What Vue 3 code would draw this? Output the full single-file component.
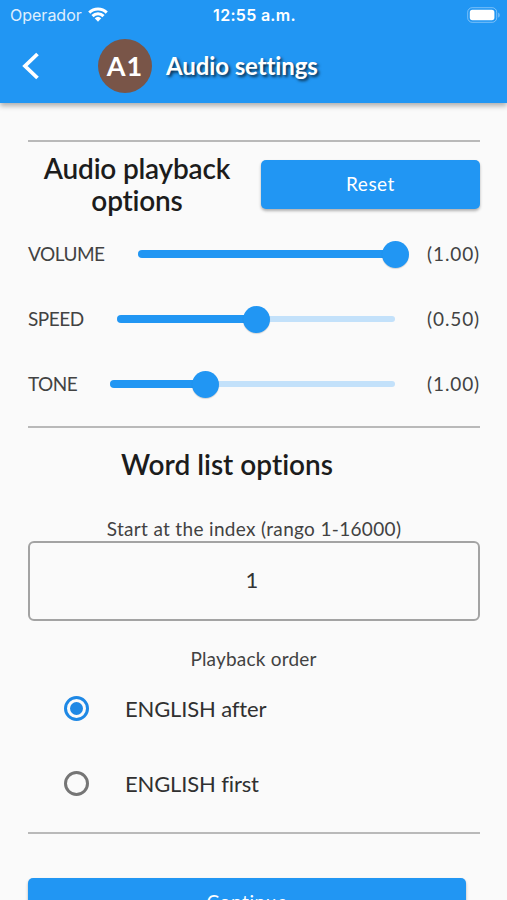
<script setup>
import { reactive, ref } from 'vue';

const start_index = ref("1");
const order = ref("after");

const sliders = reactive([
  { key: "volume", label: "VOLUME", value: 1.0, min: 0, max: 1 },
  { key: "speed", label: "SPEED", value: 0.5, min: 0, max: 1 },
  { key: "tone", label: "TONE", value: 1.0, min: 0.5, max: 2 }
])

const orders = [
  { key: "after", label: "ENGLISH after" },
  { key: "first", label: "ENGLISH first" }
]

function percent(s) {
  return (s.value - s.min) / (s.max - s.min) * 100 + '%';
}

function reset() {
  sliders[0].value = 1.0;
  sliders[1].value = 0.5;
  sliders[2].value = 1.0;
}
</script>

<template>
  <div class="screen">
    <header class="top">
      <div class="status">
        <div class="carrier">
          <span class="operator">Operador</span>
          <svg class="wifi" width="20" height="15" viewBox="0 0 20 15">
            <path d="M0.2 4.6a13.8 13.8 0 0 1 19.6 0l-2.1 2.2a10.8 10.8 0 0 0-15.4 0z" />
            <path d="M3.4 8a9.2 9.2 0 0 1 13.2 0l-2.2 2.2a6.2 6.2 0 0 0-8.8 0z" />
            <path d="M6.7 11.3a4.8 4.8 0 0 1 6.6 0L10 14.7z" />
          </svg>
        </div>
        <span class="clock">12:55 a.m.</span>
        <svg class="battery" width="34" height="16" viewBox="0 0 34 16">
          <rect x="0.7" y="0.7" width="29" height="14.6" rx="4.5" fill="none" stroke="#fff" stroke-opacity=".4" />
          <rect x="2.8" y="2.8" width="24.6" height="10.4" rx="2.6" fill="#fff" />
          <path d="M31.2 5.4c2 .8 2 4.4 0 5.2z" fill="#fff" fill-opacity=".4" />
        </svg>
      </div>
      <div class="bar">
        <svg class="back" width="20" height="28" viewBox="0 0 20 28">
          <path d="M17.5 2L5 14l12.5 12" fill="none" stroke="#fff" stroke-width="3.8" />
        </svg>
        <div class="level"><span>A1</span></div>
        <h1>Audio settings</h1>
      </div>
    </header>

    <main>
      <hr>
      <div class="playback">
        <h2>Audio playback<br>options</h2>
        <button class="btn reset" @click="reset()">Reset</button>
      </div>

      <div class="row" v-for="s in sliders" :key="s.key">
        <span class="name">{{ s.label }}</span>
        <div class="slider">
          <div class="active" :style="{ width: percent(s) }"></div>
          <div class="thumb" :style="{ left: percent(s) }"></div>
        </div>
        <span class="value">({{ s.value.toFixed(2) }})</span>
      </div>

      <hr>
      <h2 class="words">Word list options</h2>
      <label class="hint" for="index">Start at the index (rango 1-16000)</label>
      <input id="index" type="text" v-model="start_index">

      <p class="order-title">Playback order</p>
      <div class="option" v-for="o in orders" :key="o.key" @click="order = o.key">
        <span class="radio" :class="{ on: order == o.key }"></span>
        <span>{{ o.label }}</span>
      </div>
      <hr>
      <button class="btn next">Continue</button>
    </main>
  </div>
</template>

<style>
body {
  margin: 0;
  background: #fafafa;
}
</style>

<style scoped>
* {
  box-sizing: border-box;
}

.screen {
  height: 900px;
  overflow: hidden;
  background: #fafafa;
  color: #424242;
  font-family: Lato, sans-serif;
  font-variant-ligatures: none;
}

.top {
  position: relative;
  height: 103px;
  background: #2196f3;
  color: #fff;
  box-shadow: 0 3px 5px rgba(0, 0, 0, .3);
}

.status {
  display: grid;
  grid-template-columns: 1fr auto 1fr;
  align-items: center;
  height: 29px;
  padding: 0 6px 0 10px;
  font-family: Inter, sans-serif;
}

.carrier {
  display: flex;
  align-items: center;
  gap: 6px;
}

.operator {
  font-size: 16px;
  opacity: .85;
}

.wifi {
  fill: #fff;
}

.clock {
  margin-right: 2px;
  font-size: 16px;
  font-weight: 600;
  letter-spacing: .3px;
}

.battery {
  justify-self: end;
}

.bar {
  display: flex;
  align-items: center;
  height: 73px;
  padding-left: 20px;
}

.level {
  display: flex;
  align-items: center;
  justify-content: center;
  width: 54px;
  height: 54px;
  margin-left: 58px;
  border-radius: 50%;
  background: #795548;
  font-size: 27px;
  font-weight: 700;
  letter-spacing: 1px;
}

h1 {
  margin: 0 0 0 14px;
  font-size: 24px;
  font-weight: 700;
  letter-spacing: -.1px;
  text-shadow: 2px 2px 3px rgba(0, 0, 0, .7);
}

main {
  padding: 37px 27px 0 28px;
}

hr {
  height: 2px;
  margin: 0;
  border: none;
  background: #b9b9b9;
}

.playback {
  display: flex;
  justify-content: space-between;
  height: 79px;
  padding-top: 10px;
}

h2 {
  margin: 0;
  color: #1c1c1c;
  font-size: 28px;
  font-weight: 600;
  line-height: 32px;
  text-align: center;
}

.playback h2 {
  width: 218px;
  letter-spacing: -.2px;
}

.btn {
  padding: 0 0 2px;
  border: none;
  border-radius: 5px;
  background: #2196f3;
  color: #fff;
  font-family: inherit;
  font-size: 19px;
  box-shadow: 0 2px 3px rgba(0, 0, 0, .3);
}

.reset {
  width: 219px;
  height: 49px;
  margin-top: 8px;
  letter-spacing: .5px;
}

.row {
  display: flex;
  align-items: center;
  height: 65px;
}

.name {
  font-size: 19px;
  letter-spacing: -.5px;
}

.slider {
  position: relative;
  flex: 1;
  height: 6px;
  margin: 0 32px 0 33px;
  border-radius: 3px;
  background: #c3e1fa;
}

.active {
  position: absolute;
  top: -1px;
  left: 0;
  height: 8px;
  border-radius: 4px;
  background: #2196f3;
}

.thumb {
  position: absolute;
  top: -10px;
  width: 27px;
  height: 27px;
  margin-left: -13.2px;
  border-radius: 50%;
  background: #2196f3;
  box-shadow: 0 1px 1px rgba(0, 0, 0, .15);
}

.value {
  width: 53px;
  font-size: 19px;
  letter-spacing: .9px;
  white-space: nowrap;
}

.row + hr {
  margin-top: 10px;
}

.words {
  width: 398px;
  margin-top: 20px;
}

.hint {
  display: block;
  height: 24px;
  margin-top: 37px;
  font-size: 19px;
  letter-spacing: .33px;
  line-height: 24px;
  text-align: center;
}

input {
  display: block;
  width: 452px;
  height: 80px;
  padding: 0 4px 4px 0;
  border: 2px solid #a3a3a3;
  border-radius: 6px;
  outline: none;
  background: none;
  color: #333;
  font-family: inherit;
  font-size: 22px;
  text-align: center;
}

.order-title {
  height: 24px;
  margin: 26px 1px 0 0;
  font-size: 19px;
  letter-spacing: .2px;
  line-height: 24px;
  text-align: center;
}

.option {
  display: flex;
  align-items: center;
  height: 75px;
  padding-left: 36px;
  color: #303030;
  font-size: 22px;
  letter-spacing: -.15px;
}

.radio {
  display: flex;
  align-items: center;
  justify-content: center;
  width: 25px;
  height: 25px;
  margin-right: 36px;
  border: 3px solid #757575;
  border-radius: 50%;
}

.radio.on {
  border-color: #1e88e5;
}

.radio.on::after {
  width: 13px;
  height: 13px;
  border-radius: 50%;
  background: #1e88e5;
  content: "";
}

.option + hr {
  margin-top: 11px;
}

.next {
  width: 438px;
  height: 49px;
  margin-top: 44px;
  padding-bottom: 3px;
  letter-spacing: .6px;
}
</style>
